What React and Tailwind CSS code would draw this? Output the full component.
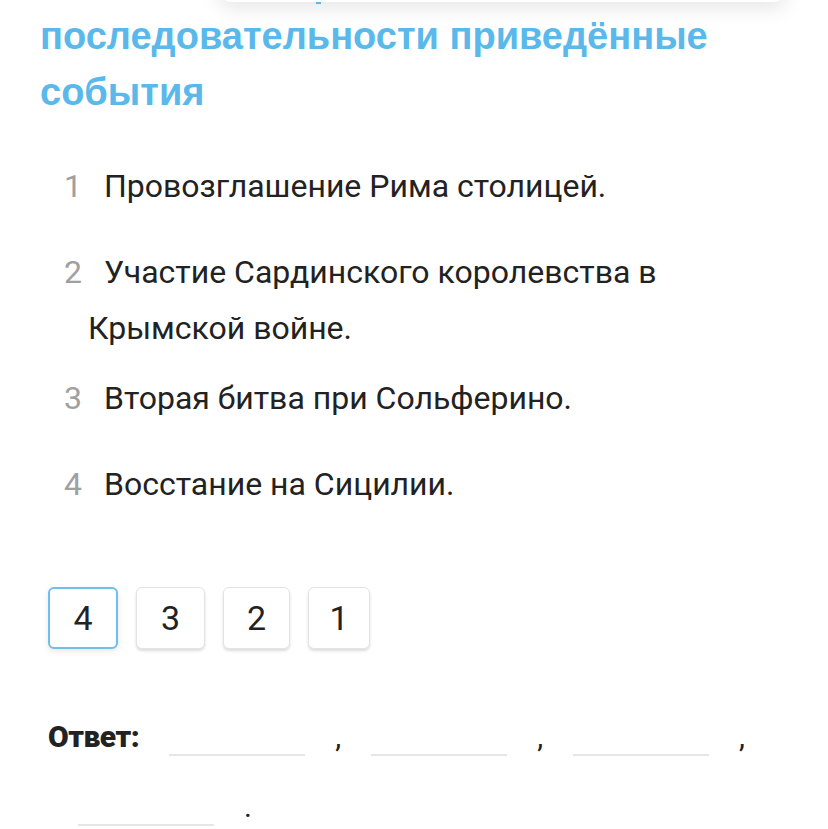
import React from "react";

const items = [
  { n: "1", text: "Провозглашение Рима столицей.", mt: "mt-0" },
  { n: "2", text: "Участие Сардинского королевства в Крымской войне.", mt: "mt-[30px]" },
  { n: "3", text: "Вторая битва при Сольферино.", mt: "mt-[14px]" },
  { n: "4", text: "Восстание на Сицилии.", mt: "mt-[30px]" },
];

const boxes = [
  { d: "4", w: "w-[70px]", active: true },
  { d: "3", w: "w-[69px]" },
  { d: "2", w: "w-[67px]" },
  { d: "1", w: "w-[62px]" },
];

function Blank() {
  return (
    <span className="ml-[30px] inline-block w-[136px] border-b-2 border-[#e6e6e6] leading-[35px]">
      {"\u00a0"}
    </span>
  );
}

function Punct({ c }) {
  return <span className="ml-[30px] leading-[40px] text-[#222]">{c}</span>;
}

export default function App() {
  return (
    <div
      className="relative h-[829px] w-[828px] overflow-hidden bg-white"
      style={{ fontFamily: "Roboto, 'Noto Sans', sans-serif" }}
    >
      {/* overlay card at top */}
      <div className="absolute left-[219px] top-[-40px] h-[42px] w-[567px] rounded-b-[12px] bg-white shadow-[0_6px_20px_rgba(0,0,0,0.10)]" />
      <div className="absolute left-[316px] top-[2px] h-[2px] w-[5px] bg-[#5ab9ea]" />

      <div className="pl-[40px] pt-[8px]">
        <h1
          className="text-[38px] font-bold leading-[56px] text-[#5ab9ea]"
          style={{ fontFamily: "'Liberation Sans', Arial, sans-serif" }}
        >
          последовательности приведённые
          <br />
          события
        </h1>
      </div>

      <div className="mt-[38px] pr-[40px]">
        {items.map((it) => (
          <div
            key={it.n}
            className={`${it.mt} ml-[88px] text-[32px] leading-[56px] text-[#222]`}
          >
            <span className="ml-[-24px] inline-block w-[40px] text-[#a0a0a0]">{it.n}</span>
            {it.text}
          </div>
        ))}
      </div>

      <div className="ml-[48px] mt-[75px] flex gap-[18px]">
        {boxes.map((b) => (
          <div
            key={b.d}
            className={`${b.w} flex h-[62px] items-center justify-center rounded-[6px] bg-white text-[34px] text-[#222] ${
              b.active
                ? "border-2 border-[#6ec0ea] shadow-[0_2px_6px_rgba(0,0,0,0.10)]"
                : "border border-[#e4e4e4] shadow-[0_2px_3px_rgba(0,0,0,0.14)]"
            }`}
          >
            {b.d}
          </div>
        ))}
      </div>

      <div className="ml-[48px] mt-[68px] mr-[40px] flex flex-wrap items-baseline gap-y-[30px] text-[30px]">
        <span className="font-black leading-[40px] tracking-[-0.5px] text-[#222]">Ответ:</span>
        <Blank />
        <Punct c="," />
        <Blank />
        <Punct c="," />
        <Blank />
        <Punct c="," />
        <Blank />
        <Punct c="." />
      </div>
    </div>
  );
}
